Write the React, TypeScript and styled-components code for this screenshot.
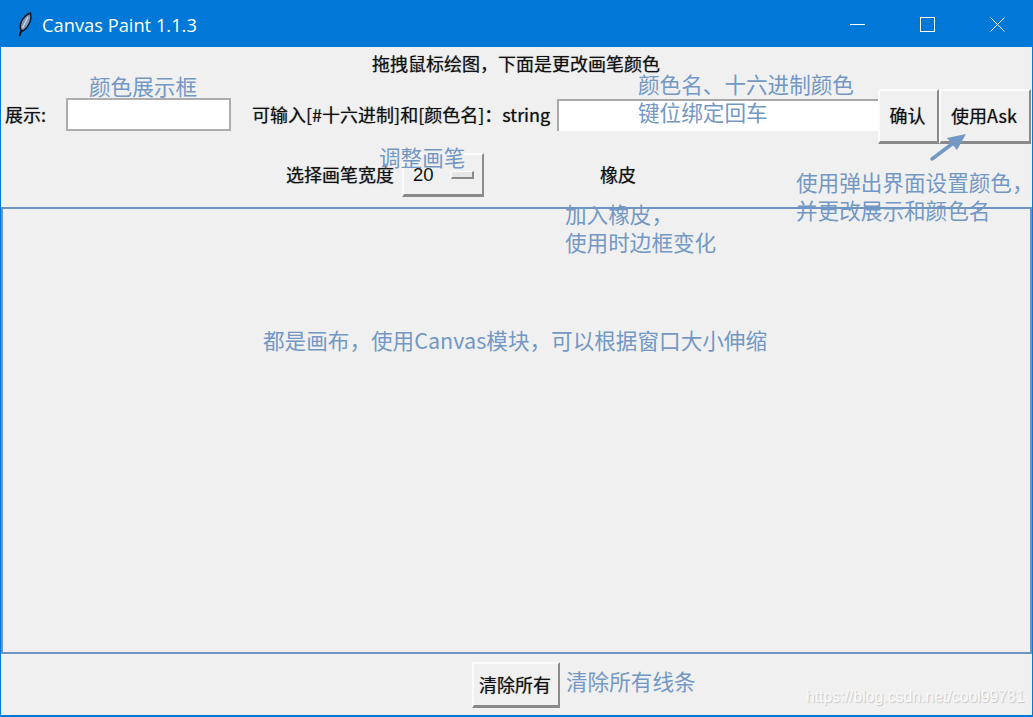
import styled, { createGlobalStyle } from "styled-components";

const cjk = `"Noto Sans CJK SC", "Liberation Sans", sans-serif`;
const blur = `0 0 1px rgba(0, 0, 0, 0.55)`;

const GlobalStyle = createGlobalStyle`
  html, body {
    margin: 0;
    padding: 0;
    background: #f0f0f0;
  }
  * {
    box-sizing: border-box;
  }
`

const Window = styled.div`
  position: relative;
  width: 1033px;
  height: 717px;
  display: flex;
  flex-direction: column;
  background: #f0f0f0;
  border: 1px solid #0078d7;
  border-width: 1px 1px 2px 1px;
  overflow: hidden;
  font-family: ${cjk};
  color: #111;
`

const TitleBar = styled.div`
  height: 46px;
  flex: none;
  display: flex;
  align-items: center;
  background: #0078d7;
  padding-left: 15px;
`

const TitleText = styled.span`
  margin-left: 8px;
  font-family: "Open Sans", sans-serif;
  font-size: 18.3px;
  color: #fff;
`

const WindowButtons = styled.div`
  margin-left: auto;
  display: flex;
`

const WindowButton = styled.div`
  width: 70px;
  height: 46px;
  display: flex;
  align-items: center;
  justify-content: center;
`

const Hint = styled.div`
  height: 36px;
  flex: none;
  padding-top: 3px;
  text-align: center;
  font-size: 18px;
  line-height: 27px;
  padding-right: 1px;
  text-shadow: ${blur};
`

const Label = styled.span`
  font-size: 18px;
  line-height: 26px;
  white-space: nowrap;
  text-shadow: ${blur};
`

const EntryRow = styled.div`
  height: 60px;
  flex: none;
  display: flex;
  align-items: flex-start;
  padding: 6px 0 0 4px;
`

const ShowLabel = styled(Label)`
  margin-top: 12px;
  width: 61px;
`

const ShowBox = styled.div`
  width: 165px;
  height: 33px;
  margin-top: 9px;
  background: #fff;
  border: 2px solid #adadad;
`

const InputLabel = styled(Label)`
  margin: 12px 0 0 21px;
  width: 305px;
`

const ColorInput = styled.div`
  width: 321px;
  height: 32px;
  margin-top: 10px;
  background: #fff;
  border-top: 2px solid #a8a8a8;
  border-left: 2px solid #a8a8a8;
`

const RaisedButton = styled.div<{ $width: number; $height: number }>`
  width: ${props => props.$width}px;
  height: ${props => props.$height}px;
  flex: none;
  display: flex;
  align-items: center;
  justify-content: center;
  padding: 0 2px 2px 0;
  background: #f0f0f0;
  border-top: 2px solid #fbfbfb;
  border-left: 2px solid #fbfbfb;
  border-right: 2px solid #8a8a8a;
  border-bottom: 3px solid #8a8a8a;
  font-size: 18px;
  white-space: nowrap;
  text-shadow: ${blur};
`

const BrushRow = styled.div`
  height: 64px;
  flex: none;
  display: flex;
  align-items: flex-start;
  padding: 10px 0 0 285px;
`

const BrushLabel = styled(Label)`
  margin-top: 8px;
  width: 116px;
`

const MenuButton = styled(RaisedButton)`
  justify-content: flex-start;
  padding: 0 0 0 9px;
  font-size: 18.5px;
  font-family: "Liberation Sans", sans-serif;
  text-shadow: none;
`

const MenuMark = styled.span`
  width: 23px;
  height: 8px;
  margin-left: 17px;
  background: #e6e6e6;
  border-top: 1px solid #fbfbfb;
  border-left: 1px solid #fbfbfb;
  border-right: 2px solid #8a8a8a;
  border-bottom: 2px solid #8a8a8a;
`

const EraserLabel = styled(Label)`
  margin: 8px 0 0 116px;
`

const DrawArea = styled.div`
  flex: 1;
  background: #f0f0f0;
  border: 2px solid #6d94c2;
`

const Footer = styled.div`
  height: 61px;
  flex: none;
  display: flex;
  justify-content: flex-start;
  padding: 8px 0 0 471px;
`

const Note = styled.div<{ $x: number; $y: number }>`
  position: absolute;
  left: ${props => props.$x}px;
  top: ${props => props.$y}px;
  font-size: 21.6px;
  line-height: 27px;
  color: #7398c4;
  white-space: pre;
`

const ArrowMark = styled.svg`
  position: absolute;
  left: 925px;
  top: 128px;
`

const Watermark = styled.div`
  position: absolute;
  left: 805px;
  top: 686px;
  font-family: "Liberation Sans", sans-serif;
  font-size: 15.8px;
  line-height: 20px;
  color: #f9f9f9;
  text-shadow: 1px 1px 1px #c6c6c6;
`

const Feather = () => (
  <svg width="18" height="26" viewBox="0 0 18 26">
    <path d="M3.5 25 L6 17" stroke="#0c0c0c" strokeWidth="1.8" fill="none" />
    <path d="M5 19 C2.5 13 7 5 14.5 2 C16 8 13.5 15 7 20 Z" fill="#7f98ba" stroke="#10151d" strokeWidth="1.5" />
    <path d="M6.5 17 L12 6" stroke="#e8eef6" strokeWidth="1" />
  </svg>
)

export default function App() {
  return (
    <>
      <GlobalStyle />
      <Window>
        <TitleBar>
          <Feather />
          <TitleText>Canvas Paint 1.1.3</TitleText>
          <WindowButtons>
            <WindowButton>
              <svg width="15" height="15" viewBox="0 0 15 15">
                <path d="M0 7.5 H15" stroke="#fff" strokeWidth="1" />
              </svg>
            </WindowButton>
            <WindowButton>
              <svg width="15" height="15" viewBox="0 0 15 15">
                <rect x="0.5" y="0.5" width="14" height="14" stroke="#fff" strokeWidth="1" fill="none" />
              </svg>
            </WindowButton>
            <WindowButton>
              <svg width="15" height="15" viewBox="0 0 15 15">
                <path d="M0.5 0.5 L14.5 14.5 M14.5 0.5 L0.5 14.5" stroke="#fff" strokeWidth="1" />
              </svg>
            </WindowButton>
          </WindowButtons>
        </TitleBar>

        <Hint>拖拽鼠标绘图，下面是更改画笔颜色</Hint>

        <EntryRow>
          <ShowLabel>展示:</ShowLabel>
          <ShowBox />
          <InputLabel>可输入[#十六进制]和[颜色名]：string</InputLabel>
          <ColorInput />
          <RaisedButton $width={61} $height={55}>确认</RaisedButton>
          <RaisedButton $width={92} $height={55}>使用Ask</RaisedButton>
        </EntryRow>

        <BrushRow>
          <BrushLabel>选择画笔宽度</BrushLabel>
          <MenuButton $width={82} $height={44}>
            20
            <MenuMark />
          </MenuButton>
          <EraserLabel>橡皮</EraserLabel>
        </BrushRow>

        <DrawArea />

        <Footer>
          <RaisedButton $width={88} $height={46}>清除所有</RaisedButton>
        </Footer>

        <Note $x={88} $y={71}>颜色展示框</Note>
        <Note $x={637} $y={69}>颜色名、十六进制颜色</Note>
        <Note $x={637} $y={97}>键位绑定回车</Note>
        <Note $x={378} $y={142}>调整画笔</Note>
        <Note $x={795} $y={167}>使用弹出界面设置颜色，</Note>
        <Note $x={795} $y={195}>并更改展示和颜色名</Note>
        <Note $x={564} $y={199}>加入橡皮，</Note>
        <Note $x={564} $y={227}>使用时边框变化</Note>
        <Note $x={262} $y={325}>都是画布，使用Canvas模块，可以根据窗口大小伸缩</Note>
        <Note $x={565} $y={666}>清除所有线条</Note>

        <ArrowMark width="46" height="36" viewBox="0 0 46 36">
          <path d="M6 30 L30 12" stroke="#7398c4" strokeWidth="3.5" strokeLinecap="round" />
          <path d="M40 5 L21 9 L31 21 Z" fill="#7398c4" />
        </ArrowMark>

        <Watermark>https://blog.csdn.net/cool99781</Watermark>
      </Window>
    </>
  );
}
